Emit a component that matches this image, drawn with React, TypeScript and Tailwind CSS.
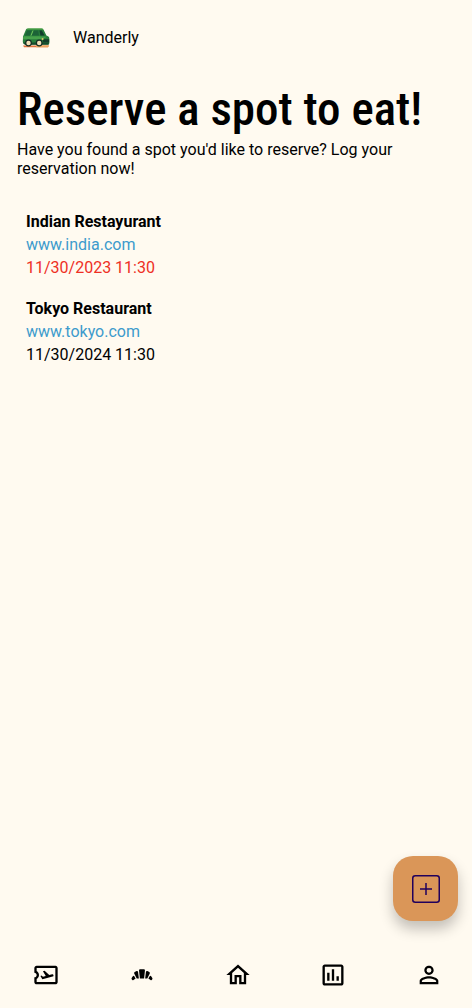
import type { ReactNode } from "react";
import {
  MdOutlineAirplaneTicket,
  MdBakeryDining,
  MdOutlineHome,
  MdOutlineAssessment,
  MdPersonOutline,
} from "react-icons/md";

type Reservation = { name: string; site: string; time: string; past: boolean };

const reservations: Reservation[] = [
  { name: "Indian Restayurant", site: "www.india.com", time: "11/30/2023 11:30", past: true },
  { name: "Tokyo Restaurant", site: "www.tokyo.com", time: "11/30/2024 11:30", past: false },
];

const tabs: { label: string; icon: ReactNode }[] = [
  { label: "Trips", icon: <MdOutlineAirplaneTicket size={28} /> },
  { label: "Food", icon: <MdBakeryDining size={28} /> },
  { label: "Home", icon: <MdOutlineHome size={28} /> },
  { label: "Stats", icon: <MdOutlineAssessment size={28} /> },
  { label: "Profile", icon: <MdPersonOutline size={28} /> },
];

function VanLogo() {
  return (
    <svg className="h-5 w-7" viewBox="0 0 28 20" aria-hidden="true">
      <path d="M1 17.5h26l-1 1.8H2z" fill="#e2733c" />
      <path d="M14 17.5h13l-1 1.8H14z" fill="#eda45c" />
      <path d="M1 8.5 4 1.6Q4.4.6 6 .6h13.5q1.4 0 2.1 1.2l2.8 5.6 2 1.2q.9.6.9 2v4.6q0 1.4-1.5 1.4H3q-2-.4-2.2-2.6z" fill="#277d3b" />
      <path d="M4.5 1.5Q5 .4 6.5.4h13.3q1 0 1.5 1z" fill="#58b04a" />
      <path d="M5 2.6h5L8 7.6H2.9zM11.5 2.6h4.7l.8 5H9.6z" fill="#1c6337" />
      <path d="m11 2.6-2 5" stroke="#72c45b" strokeWidth="1" />
      <path d="M17.5 2.4h2.3l2.8 5h-4.2z" fill="#123d2c" />
      <path d="M1.5 8.3h16l7.5.4-5 2.6H1z" fill="#47a14b" />
      <path d="M20.8 11.2h6.4v3.2h-6z" fill="#143b2a" />
      <path d="M1 14.5h25.6v2.3H3z" fill="#164c2d" />
      <circle cx="6.5" cy="15" r="3.4" fill="#172e25" />
      <circle cx="6.5" cy="15" r="2.2" fill="#f0dfb8" />
      <circle cx="17.2" cy="15" r="3.4" fill="#172e25" />
      <circle cx="17.2" cy="15" r="2.2" fill="#f0dfb8" />
      <circle cx="20.6" cy="11" r="1" fill="#dcc66a" />
    </svg>
  );
}

export default function App() {
  return (
    <div className="relative flex min-h-screen flex-col bg-[#fffaf0] font-['Roboto',sans-serif] text-base text-black">
      <header className="flex h-[76px] items-center gap-[23px] pl-[22px]">
        <VanLogo />
        <span className="leading-5">Wanderly</span>
      </header>

      <main className="flex-1 px-[17px]">
        <h1 className="pt-1 font-['Roboto_Condensed','Roboto',sans-serif] text-[47px] leading-[58px] font-medium whitespace-nowrap">
          Reserve a spot to eat!
        </h1>
        <p className="pt-0.5 leading-[19px]">
          Have you found a spot you'd like to reserve? Log your reservation now!
        </p>
        <ul className="flex flex-col gap-[18px] px-[9px] pt-8">
          {reservations.map((r) => (
            <li key={r.name} className="flex flex-col items-start leading-[23px]">
              <h2 className="font-bold">{r.name}</h2>
              <a href={`https://${r.site}`} className="text-[#3d9bcc]">
                {r.site}
              </a>
              <span className={r.past ? "text-[#ee2f24]" : "text-black"}>{r.time}</span>
            </li>
          ))}
        </ul>
      </main>

      <button
        type="button"
        aria-label="Add reservation"
        className="absolute right-3.5 bottom-[87px] flex size-[65px] items-center justify-center rounded-[20px] bg-[#da9658] text-[#20005c] shadow-[0_8px_14px_rgba(0,0,0,0.24)]"
      >
        <svg className="size-7" viewBox="0 0 28 28" fill="none" stroke="currentColor" strokeWidth="1.5" aria-hidden="true">
          <rect x="0.75" y="0.75" width="26.5" height="26.5" rx="2.5" />
          <path d="M14 8v12M8 14h12" />
        </svg>
      </button>

      <nav className="flex h-[66px] items-center justify-between pr-[29px] pl-8">
        {tabs.map((t) => (
          <button key={t.label} type="button" aria-label={t.label}>
            {t.icon}
          </button>
        ))}
      </nav>
    </div>
  );
}
